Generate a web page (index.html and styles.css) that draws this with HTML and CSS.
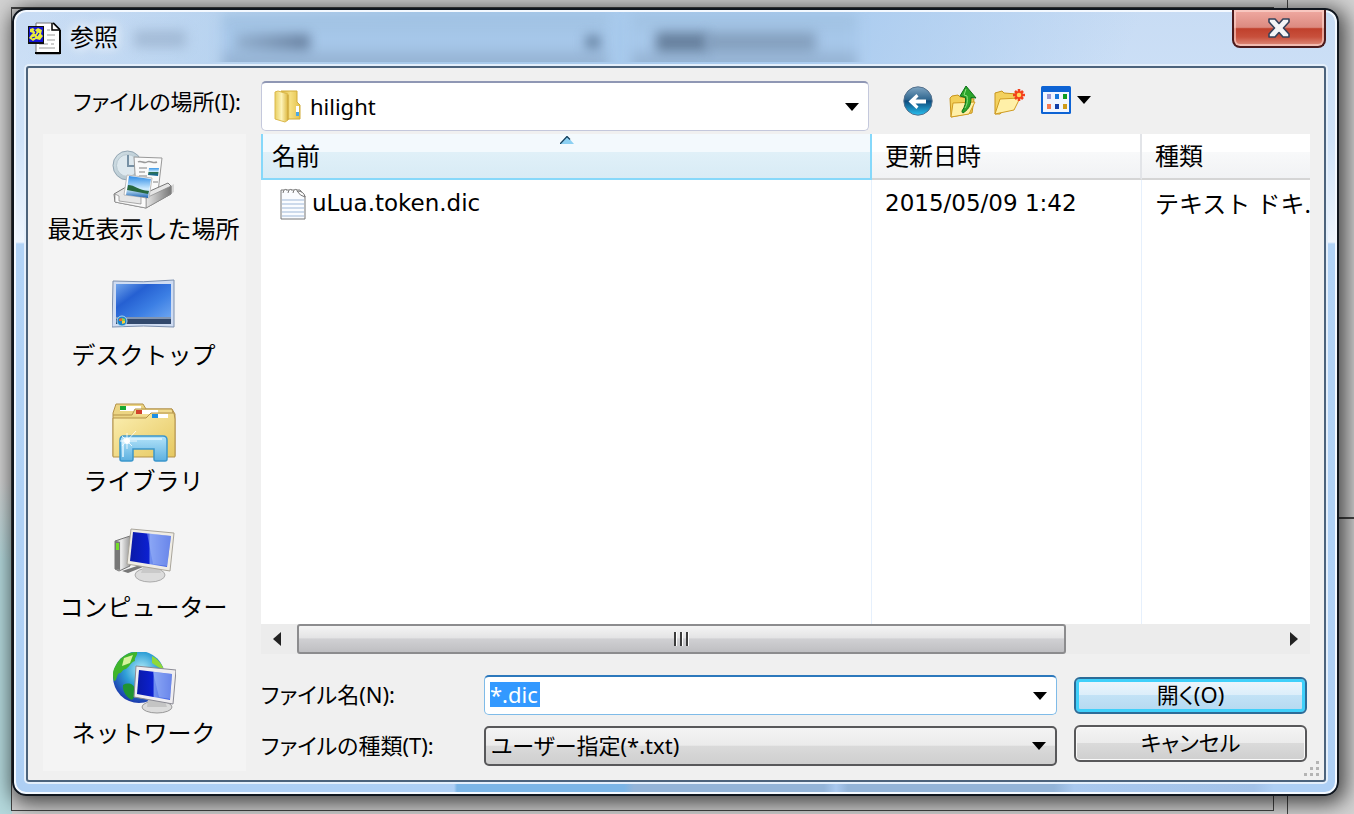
FILE: index.html
```html
<!DOCTYPE html>
<html lang="ja">
<head>
<meta charset="utf-8">
<title>参照</title>
<link rel="stylesheet" href="styles.css">
</head>
<body>
<div class="backdrop" aria-hidden="true">
  <i class="edge edge-top"></i>
  <i class="edge edge-left"></i>
  <i class="edge edge-bottom"></i>
  <i class="edge edge-side"></i>
  <i class="edge edge-frame"></i>
  <i class="edge edge-right"></i>
</div>
<main class="dialog">
  <header class="titlebar">
    <div class="glass" aria-hidden="true">
      <i class="haze haze-label"></i>
      <i class="haze haze-combo"></i>
      <i class="haze haze-word"></i>
      <i class="haze haze-dot"></i>
      <i class="haze haze-button"></i>
      <i class="haze haze-caption"></i>
      <i class="haze haze-caption2"></i>
    </div>
    <svg class="app-icon" viewBox="0 0 33 33" width="33" height="33" aria-hidden="true">
      <path d="M8 1h17l7 7v24H8z" fill="#fff" stroke="#777" stroke-width="1"/>
      <path d="M7 31h25V8M25 1l7 7" fill="none" stroke="#000" stroke-width="2"/>
      <path d="M24 1v7h7" fill="#fff" stroke="#000" stroke-width="1.5"/>
      <path d="M19 8h3M19 13h8M19 18h8M11 22h9M23 22h3M11 26h16" stroke="#999" stroke-width="1.2"/>
      <rect x="0" y="4" width="16" height="18" fill="#111"/>
      <rect x="1" y="5" width="14" height="15" fill="#1414d8"/>
      <path d="M2 7l3-1 2 2 3-2 4 2-1 4 2 2-3 4-4-1-3 2-4-3 2-3 2-2-3-1z" fill="#e8ec3c"/>
      <path d="M6 8l2 2-1 2M11 11l-2 3M4 16l3-1" stroke="#1414d8" stroke-width="1.200" fill="none"/>
    </svg>
    <h1 class="title">参照</h1>
    <button class="close" type="button" aria-label="閉じる">
      <svg viewBox="0 0 24 20" width="24" height="20" aria-hidden="true">
        <path d="M2 1h6l4 4.500L16 1h6v3l-5.500 6L22 16v3h-6l-4-4.500L8 19H2v-3l5.500-6L2 4z" fill="#f4f4f6" stroke="#35415a" stroke-width="1.6" stroke-linejoin="round"/>
      </svg>
    </button>
  </header>

  <section class="content">
    <label class="look-label" for="look">ファイルの場所(I):</label>
    <div class="look-row">
      <div class="combo combo-look">
        <svg class="folder" viewBox="0 0 28 34" width="28" height="34" aria-hidden="true">
          <defs>
            <linearGradient id="fo1" x1="0" x2="1"><stop offset="0" stop-color="#e9cf62"/><stop offset=".5" stop-color="#fdf3b8"/><stop offset="1" stop-color="#dcb73e"/></linearGradient>
            <linearGradient id="fo2" x1="0" x2="1"><stop offset="0" stop-color="#d9b440"/><stop offset=".5" stop-color="#f6df80"/><stop offset="1" stop-color="#e3c14c"/></linearGradient>
          </defs>
          <path d="M7 1h16v11l3 3v14H12z" fill="url(#fo2)" stroke="#d2ac38"/>
          <path d="M1 2l3-1 10 3v26l-3 2-10-3z" fill="url(#fo1)" stroke="#dcb94c"/>
          <path d="M14 5v25" stroke="#c9a43a"/>
          <rect x="22" y="16" width="3" height="10" fill="#fff"/>
          <rect x="22" y="22" width="3" height="4" fill="#4aa8e8"/>
        </svg>
        <select id="look"><option>hilight</option></select>
        <svg class="arrow" viewBox="0 0 14 8" width="14" height="8" aria-hidden="true"><path d="M0 0h14L7 8z"/></svg>
      </div>
      <nav class="toolbar" aria-label="ツール">
        <button type="button" aria-label="戻る">
          <svg viewBox="0 0 30 30" width="30" height="30">
            <defs>
              <linearGradient id="bk" x1="0" y1="0" x2="0" y2="1"><stop offset="0" stop-color="#7fa5c2"/><stop offset=".45" stop-color="#2f668f"/><stop offset=".5" stop-color="#0d4a7c"/><stop offset="1" stop-color="#28c0f0"/></linearGradient>
            </defs>
            <circle cx="15" cy="15" r="14.200" fill="url(#bk)" stroke="#54708c"/>
            <path d="M5.500 15.500l8-7.500 2 2.500-3 3H23v4H12.500l3 3-2 2.500z" fill="#fff"/>
          </svg>
        </button>
        <button type="button" aria-label="上のフォルダーへ">
          <svg viewBox="0 0 28 32" width="28" height="32">
            <path d="M1 12l2-2 6-1 2 2 14 2-2 14-21 4z" fill="#f2cf58" stroke="#c8951d"/>
            <path d="M4 17l22-1-6 12L2 31z" fill="#fff0a8" stroke="#d09c22"/>
            <path d="M17 0l10 12-5-.5c0 6-1 11-8 15.500-1-.5-1-1-1-2 3-4 4-9 3.500-13.500L11 10z" fill="#2ba52b" stroke="#0d6f17" stroke-linejoin="round"/>
            <path d="M17 3l-2 6 3 1c1 5 0 9-2 12" fill="none" stroke="#8be07c"/>
          </svg>
        </button>
        <button type="button" aria-label="新しいフォルダー">
          <svg viewBox="0 0 32 30" width="32" height="30">
            <path d="M2 7l7-2 2 2 13 1-1 5-16 15H2z" fill="#f3d15e" stroke="#c8951d"/>
            <path d="M7 13l20-1-6 12L2 28z" fill="#fff0a8" stroke="#d09c22"/>
            <path d="M26 3v12M20 9h12M22 5l8 8M30 5l-8 8" stroke="#f3401c" stroke-width="2.600"/>
            <circle cx="26" cy="9" r="3" fill="#ffd75a" stroke="#f3401c" stroke-width="1.500"/>
          </svg>
        </button>
        <button type="button" class="view" aria-label="表示メニュー">
          <svg viewBox="0 0 30 28" width="30" height="28">
            <rect width="30" height="28" rx="1.500" fill="#0d63d4"/>
            <rect x="2" y="6" width="26" height="20" fill="#f2f6ff"/>
            <rect x="6" y="8" width="4" height="5" fill="#9b97d2"/><rect x="14" y="8" width="4" height="5" fill="#1678dc"/><rect x="22" y="8" width="4" height="5" fill="#0d9c22"/>
            <rect x="6" y="18" width="4" height="5" fill="#f77a50"/><rect x="14" y="18" width="4" height="5" fill="#1440a8"/><rect x="22" y="18" width="4" height="5" fill="#cf9c1a"/>
          </svg>
          <svg viewBox="0 0 14 8" width="14" height="8"><path d="M0 0h14L7 8z"/></svg>
        </button>
      </nav>
    </div>

    <nav class="places" aria-label="場所">
      <button class="place" type="button">
        <svg viewBox="0 0 64 64" width="64" height="64" aria-hidden="true">
          <defs>
            <linearGradient id="rc1" x1="0" y1="0" x2="1" y2="1"><stop offset="0" stop-color="#d5e2e8"/><stop offset="1" stop-color="#a9bcc6"/></linearGradient>
            <linearGradient id="rc2" x1="0" y1="0" x2="0" y2="1"><stop offset="0" stop-color="#3a98e8"/><stop offset=".5" stop-color="#d6f0ff"/><stop offset=".55" stop-color="#2c7050"/><stop offset="1" stop-color="#1468a8"/></linearGradient>
            <linearGradient id="rc4" x1="0" y1="0" x2="0" y2="1"><stop offset="0" stop-color="#2f8ce6"/><stop offset=".6" stop-color="#d2eeff"/><stop offset="1" stop-color="#1b62b0"/></linearGradient>
            <linearGradient id="rc3" x1="0" x2="1"><stop offset="0" stop-color="#e8e8e8"/><stop offset="1" stop-color="#777"/></linearGradient>
          </defs>
          <path d="M34 60L62 44v-8l-8 4z" fill="#000" opacity=".12"/>
          <circle cx="15.500" cy="17.500" r="14.500" fill="url(#rc1)" stroke="#92a5b2"/>
          <circle cx="15.500" cy="17.500" r="11" fill="#dde8ee" stroke="#b8c8d0"/>
          <path d="M16 7v11h9" stroke="#7690a4" stroke-width="2" fill="none"/>
          <path d="M22 9l28 1-4 34-22-2z" fill="#fafafa" stroke="#999"/>
          <path d="M26 14c3-2 6 2 9 0s6 2 10 0" fill="none" stroke="#999" stroke-width="1.500"/>
          <path d="M27 20h8M27 24h6M27 28h8M41 34h5" stroke="#aaa" stroke-width="1.500"/>
          <path d="M37 20h10l-1 8-10-1z" fill="url(#rc2)"/>
          <path d="M2 46l12-7 24 4 18-8 3 3v8L34 60 3 54z" fill="#e6e6e6" stroke="#777"/>
          <path d="M34 50l25-12v8L34 60z" fill="url(#rc3)" stroke="#888" stroke-width=".7"/>
          <path d="M15 27l25 3-3 20-25-3z" fill="#fff" stroke="#bbb"/>
          <path d="M17 28l22 3-3 19-22-3z" fill="url(#rc4)"/>
          <path d="M16 37c7 0 10 5 21 6l-1 3-21-4z" fill="#27683f"/>
          <path d="M3 46l4 2v5l22 3v-7l5 1v10L3 54z" fill="#fafafa" stroke="#888" stroke-width=".7"/>
        </svg>
        <span>最近表示した場所</span>
      </button>
      <button class="place" type="button">
        <svg viewBox="0 0 64 64" width="64" height="64" aria-hidden="true">
          <defs><linearGradient id="dk" x1="0" y1="0" x2="1" y2="1"><stop offset="0" stop-color="#6fa3ea"/><stop offset=".3" stop-color="#2560d2"/><stop offset=".6" stop-color="#3c7fe4"/><stop offset="1" stop-color="#78aef4"/></linearGradient></defs>
          <path d="M1 7q30 2 61-1v47q-30-2-62 0z" fill="#cfdcf2" stroke="#7b8fae"/>
          <path d="M4 10h55v40H4z" fill="url(#dk)"/>
          <path d="M4 43h55v7H4z" fill="#31486c"/><path d="M4 43h55v2H4z" fill="#8195b2"/>
          <circle cx="10" cy="47" r="5" fill="#1d84c8" stroke="#a9d4f0"/>
          <path d="M7 45l3-1v3H7z" fill="#f0642c"/><path d="M10 44l3 1v2h-3z" fill="#8fd04c"/><path d="M10 47h3v2l-3 1z" fill="#f6cf3a"/>
        </svg>
        <span>デスクトップ</span>
      </button>
      <button class="place" type="button">
        <svg viewBox="0 0 64 64" width="64" height="64" aria-hidden="true">
          <defs>
            <linearGradient id="lb1" x1="0" y1="0" x2="1" y2="1"><stop offset="0" stop-color="#fbeeb0"/><stop offset="1" stop-color="#e6c860"/></linearGradient>
            <linearGradient id="lb2" x1="0" y1="0" x2="0" y2="1"><stop offset="0" stop-color="#b4e4fa"/><stop offset="1" stop-color="#5db0e0"/></linearGradient>
          </defs>
          <path d="M1 56V13l3-9h27l3 5h26l3 5v42z" fill="#ecd584" stroke="#b3924a"/>
          <path d="M8 6h21v5H8z" fill="#fff"/><rect x="8" y="6" width="6" height="4" fill="#16a832"/>
          <path d="M1 15h19l3-6h37l2 8" fill="#f1dc90" stroke="#b3924a"/>
          <path d="M24 10h22v4H24z" fill="#fff"/><rect x="24" y="10" width="6" height="4" fill="#d2422c"/>
          <path d="M1 57V18h33l5-5h23l1 6v38z" fill="url(#lb1)" stroke="#b3924a"/>
          <path d="M40 14h16v4H40z" fill="#fff"/><rect x="40" y="14" width="6" height="4" fill="#1d8fe4"/>
          <path d="M8 59V40q0-4 4-4h39q4 0 4 4v19q0 2-2 2H44q-2 0-2-2V49H21v10q0 2-2 2h-9q-2 0-2-2z" fill="url(#lb2)" stroke="#3b96cc" stroke-width="1.500"/>
          <path d="M11 57V41q0-2 3-2h36" fill="none" stroke="#e2f6ff" stroke-width="1.500"/>
          <path d="M15 33v16M8 41h17M10 36l10 10M24 31L10 46" stroke="#fff" stroke-width=".8"/><circle cx="15" cy="41" r="3" fill="#fff"/>
        </svg>
        <span>ライブラリ</span>
      </button>
      <button class="place" type="button">
        <svg viewBox="0 0 64 64" width="64" height="64" aria-hidden="true">
          <defs>
            <linearGradient id="pc1" x1="0" x2="1"><stop offset="0" stop-color="#0a1aa8"/><stop offset=".45" stop-color="#0c20d0"/><stop offset=".5" stop-color="#6f8ef0"/><stop offset="1" stop-color="#3555dc"/></linearGradient>
            <linearGradient id="pc2" x1="0" x2="1"><stop offset="0" stop-color="#888"/><stop offset=".4" stop-color="#eee"/><stop offset="1" stop-color="#9a9a9a"/></linearGradient>
          </defs>
          <path d="M10 45l18-6 3 2-15 6z" fill="#777"/>
          <path d="M3 15l15-5v30L7 45l-4-2z" fill="url(#pc2)" stroke="#777"/>
          <path d="M3 15l5 1v28l-5-1z" fill="#777"/><rect x="4" y="17" width="3" height="7" fill="#72dc28"/>
          <ellipse cx="38" cy="49" rx="15" ry="7" fill="#dcdcdc" stroke="#aaa"/>
          <path d="M32 38h13l4 9H29z" fill="#c9c9c9"/>
          <path d="M19 3l43 4-4 38-43-7z" fill="#efece4" stroke="#a9a59b"/>
          <path d="M21 6l38 4-4 31-37-6z" fill="url(#pc1)"/>
          <path d="M35 7l24 3-4 30-14-2z" fill="#a9c0fa" opacity=".45"/>
        </svg>
        <span>コンピューター</span>
      </button>
      <button class="place" type="button">
        <svg viewBox="0 0 64 64" width="64" height="64" aria-hidden="true">
          <defs><radialGradient id="nt" cx=".55" cy=".35" r=".65"><stop offset="0" stop-color="#aeeaf8"/><stop offset=".5" stop-color="#2f9fd6"/><stop offset="1" stop-color="#1c3cae"/></radialGradient></defs>
          <circle cx="27" cy="25" r="26" fill="url(#nt)"/>
          <path d="M3 15C8 4 17 0 25 0c1 4-3 5-2 9-4 1-5 5-9 8-4 0-4 5-7 4-3 3-2 8-5 8-1-4-2-9 1-14z" fill="#3fb52a"/>
          <path d="M12 6l9-3-3 8-8 3z" fill="#d4f29c"/>
          <path d="M11 33c5-3 11-1 12 4 2 3-1 9-3 11-5-2-10-9-9-15z" fill="#209432"/>
          <path d="M40 4c6 3 10 8 12 14l-6-3-6-4z" fill="#8fd83a"/>
          <ellipse cx="45" cy="55" rx="15" ry="6" fill="#dcdcdc" stroke="#999"/>
          <path d="M36 47h16l3 8H35z" fill="#c4c4c4"/>
          <path d="M24 14l40 4-3 34-39-7z" fill="#efedf0" stroke="#8a8a94"/>
          <path d="M27 18l33 4-2 26-33-6z" fill="url(#pc1)"/>
          <path d="M41 20l19 2-2 25-11-2z" fill="#a9c0fa" opacity=".45"/>
        </svg>
        <span>ネットワーク</span>
      </button>
    </nav>

    <div class="main">
      <div class="list">
        <table>
          <colgroup><col><col class="col-date"><col class="col-kind"></colgroup>
          <thead>
            <tr>
              <th class="sorted" scope="col">名前
                <svg class="sort" viewBox="0 0 14 8" width="14" height="8" aria-hidden="true"><path d="M0 8l7-8 7 8z" fill="#8cd0f2"/><path d="M0 8l7-7.500 3 3" fill="none" stroke="#17405c" stroke-width="1.300"/></svg>
              </th>
              <th scope="col">更新日時</th>
              <th scope="col">種類</th>
            </tr>
          </thead>
          <tbody>
            <tr>
              <td class="latin">
                <div class="file">
                  <svg viewBox="0 0 26 32" width="26" height="32" aria-hidden="true">
                    <path d="M1 2h19l5 6v23H1z" fill="#fafcff" stroke="#777"/>
                    <path d="M2 12h22M2 16h22M2 20h22M2 24h22M2 28h22" stroke="#9fb8d8"/>
                    <path d="M3 5q1-5 4-3M8 5q1-5 4-3M13 5q1-5 4-3M17 3q7 0 8 6-5-1-8-6" fill="#fff" stroke="#777"/>
                  </svg>
                  <span>uLua.token.dic</span>
                </div>
              </td>
              <td class="latin">2015/05/09 1:42</td>
              <td>テキスト ドキ.</td>
            </tr>
          </tbody>
        </table>
      </div>
      <div class="scrollbar">
        <button type="button" class="step" aria-label="左へスクロール"><svg viewBox="0 0 8 14" width="8" height="14"><path d="M8 0v14L0 7z" fill="#222"/></svg></button>
        <div class="track"><div class="thumb"><i></i><i></i><i></i></div></div>
        <button type="button" class="step" aria-label="右へスクロール"><svg viewBox="0 0 8 14" width="8" height="14"><path d="M0 0v14l8-7z" fill="#222"/></svg></button>
      </div>
      <form class="form">
        <div class="fields">
          <label for="name">ファイル名(N):</label>
          <div class="combo combo-name">
            <input id="name" type="text" value="*.dic" size="4">
            <svg class="arrow" viewBox="0 0 14 8" width="14" height="8" aria-hidden="true"><path d="M0 0h14L7 8z"/></svg>
          </div>
          <label for="kind">ファイルの種類(T):</label>
          <div class="combo combo-kind">
            <select id="kind"><option>ユーザー指定(*.txt)</option></select>
            <svg class="arrow" viewBox="0 0 14 8" width="14" height="8" aria-hidden="true"><path d="M0 0h14L7 8z"/></svg>
          </div>
        </div>
        <div class="actions">
          <button type="button" class="btn btn-open">開く(O)</button>
          <button type="button" class="btn">キャンセル</button>
        </div>
      </form>
    </div>
    <svg class="grip" viewBox="0 0 16 16" width="16" height="16" aria-hidden="true">
      <path d="M12 0h3v3h-3zM6 6h3v3H6zM12 6h3v3h-3zM0 12h3v3H0zM6 12h3v3H6zM12 12h3v3h-3z" fill="#b4b4b4"/>
    </svg>
  </section>
</main>
</body>
</html>
```

FILE: styles.css
```css
* { box-sizing: border-box; }

body {
  margin: 0;
  min-height: 100vh;
  display: flex;
  padding: 8px 15px 18px 12px;
  background:
    linear-gradient(to bottom, transparent 480px, #b4d8dc 560px) left / 12px 100% no-repeat,
    #d2d2d2;
  font-family: "Noto Sans", "Noto Sans CJK JP", sans-serif;
  font-size: 24px;
  line-height: 32px;
  color: #000;
  position: relative;
  overflow: hidden;
}

button, input, select { font: inherit; color: inherit; margin: 0; }
button { padding: 0; border: 0; background: none; }
svg { display: block; flex: none; }

/* Window edges that show around the dialog */
.backdrop { position: absolute; inset: 0; overflow: hidden; }
.edge { position: absolute; background: #444; }
.edge-top { top: 7px; left: 11px; right: 80px; height: 2px; }
.edge-left { top: 7px; left: 11px; bottom: 3px; width: 1px; }
.edge-bottom { bottom: 3px; left: 11px; right: 80px; height: 1px; }
.edge-side { bottom: 3px; right: 80px; width: 1px; height: 20px; }
.edge-frame { top: 0; bottom: 0; right: 66px; width: 1px; }
.edge-right { top: 517px; right: 0; width: 20px; height: 2px; }

.dialog {
  position: relative;
  flex: 1;
  display: flex;
  flex-direction: column;
  padding: 0 11px 12px 12px;
  border: 2px solid #10161e;
  border-radius: 14px;
  background:
    linear-gradient(110deg, transparent 2%, #a7c9ea 30%, #a9cbef 60%, transparent 84%) top / 100% 58px no-repeat,
    linear-gradient(to right, transparent 440px, #7bb5e6 443px, #7bb5e6 610px, #93b4d8 620px, #93b4d8 810px, #a9c8ee 822px, #93b4d8 834px, #93b4d8 1040px, #a9c8ee 1060px, #a3c2e8 1240px, transparent 1260px) bottom / 100% 13px no-repeat,
    linear-gradient(to bottom, #c8dcf4 0, #cfe2f8 130px, #eef5fd 232px, #b2d3f6 234px, #aecff4 100%);
  box-shadow:
    inset 0 0 0 2px #f4f9ff,
    3px 4px 20px 4px rgba(0, 0, 0, .65);
}

.titlebar {
  position: relative;
  display: flex;
  align-items: flex-start;
  height: 56px;
  padding-left: 2px;
}
.app-icon { position: relative; margin-top: 12px; }
.title {
  position: relative;
  margin: 11px 0 0 9px;
  font-size: 24px;
  font-weight: 400;
  text-shadow: 0 0 10px #fff, 0 0 16px #fff;
}
.close {
  position: relative;
  display: flex;
  justify-content: center;
  align-items: center;
  width: 94px;
  height: 38px;
  margin-left: auto;
  border: 2px solid #4a1a1c;
  border-top: 0;
  border-radius: 0 0 8px 8px;
  background: linear-gradient(#f0aaa2 0, #dc8a80 48%, #c0402c 52%, #c8503c 75%, #e09080 100%);
  box-shadow: inset 0 0 0 2px rgba(255, 220, 214, .6);
}

/* Controls of the window underneath, seen through the glass */
.glass { position: absolute; inset: 2px 0 4px; overflow: hidden; }
.haze { position: absolute; filter: blur(6px); }
.haze-label { left: 108px; top: 18px; width: 52px; height: 18px; background: #8ba2be; opacity: .5; }
.haze-combo { left: 196px; top: 2px; width: 386px; height: 60px; background: linear-gradient(#9fc0e0, #a8c9ec 50%, #96b4d4 75%); }
.haze-word { left: 210px; top: 22px; width: 74px; height: 16px; background: linear-gradient(to right, #8ba6c4, #4c617e); opacity: .7; }
.haze-dot { left: 560px; top: 24px; width: 14px; height: 12px; background: #5f7b9a; }
.haze-button { left: 606px; top: 2px; width: 225px; height: 60px; background: linear-gradient(#9fc0e0, #a8c9ec 50%, #96b4d4 75%); }
.haze-caption { left: 630px; top: 20px; width: 52px; height: 20px; background: #5c7490; opacity: .85; }
.haze-caption2 { left: 680px; top: 20px; width: 110px; height: 20px; background: #7891ae; opacity: .7; }

.content {
  position: relative;
  flex: 1;
  display: grid;
  grid-template-columns: 203px minmax(0, 1fr);
  grid-template-rows: 50px minmax(0, 1fr);
  column-gap: 15px;
  row-gap: 3px;
  padding: 13px 14px 9px 15px;
  border: 2px solid #4c637c;
  border-radius: 3px;
  background: #f0f0f0;
  box-shadow: 0 0 0 2px #e4effb;
}

.look-label, .fields, .actions { font-size: 22px; font-feature-settings: "palt"; }
.look-label { padding: 4px 5px 0 0; text-align: right; white-space: nowrap; }
.look-row {
  display: grid;
  grid-template-columns: minmax(0, 1fr) 407px;
  column-gap: 34px;
}

.combo {
  position: relative;
  display: flex;
  align-items: center;
  border-radius: 5px;
}
.combo select {
  flex: 1;
  min-width: 0;
  height: 100%;
  border: 0;
  outline: 0;
  background: none;
  appearance: none;
}
.combo .arrow { position: absolute; right: 9px; top: 0; bottom: 0; margin: auto; pointer-events: none; }
.combo-look {
  padding: 0 8px 0 12px;
  gap: 8px;
  border: 1px solid #c4c8dc;
  border-top: 2px solid #8f97b4;
  background: #fff;
  font-size: 22px;
}
.combo-look select { padding-bottom: 2px; }

.toolbar { display: flex; align-items: flex-start; gap: 16px; padding-top: 5px; }
.view { display: flex; align-items: center; gap: 6px; }

.places {
  display: flex;
  flex-direction: column;
  gap: 28px;
  padding: 14px 2px 0 0;
  background: #f4f4f4;
}
.place {
  display: flex;
  flex-direction: column;
  align-items: center;
  line-height: 34px;
  white-space: nowrap;
}

.main { display: flex; flex-direction: column; min-width: 0; padding-bottom: 5px; }
.list { flex: 1; overflow: hidden; background: #fff; }
table { width: 100%; height: 100%; border-collapse: separate; border-spacing: 0; table-layout: fixed; }
.col-date { width: 270px; }
.col-kind { width: 168px; }
th {
  position: relative;
  height: 46px;
  padding: 0 11px;
  border-right: 2px solid #e2e4e8;
  border-bottom: 2px solid #d5d5d5;
  background: linear-gradient(#fff 40%, #f8f9fa 42%, #f1f2f4);
  font-weight: 400;
  text-align: left;
}
th + th, td + td { padding-left: 13px; }
th:last-child { border-right: 0; }
th.sorted {
  border: 2px solid #86d8fa;
  border-top: 0;
  background: linear-gradient(#f3f9fd 40%, #e0f0f8 42%, #d8ebf5);
  padding-left: 9px;
}
.sort { position: absolute; top: 2px; left: 50%; margin-left: -7px; }
td {
  padding: 8px 0 0 19px;
  border-right: 1px solid #e6f0fc;
  vertical-align: top;
  white-space: nowrap;
}
td:last-child { border-right: 0; }
.latin { font-family: "DejaVu Sans", "Noto Sans CJK JP", sans-serif; font-size: 23px; line-height: 30px; }
.file { display: flex; gap: 6px; }

.scrollbar { display: flex; height: 30px; background: #ececec; }
.step { display: flex; align-items: center; justify-content: center; width: 32px; }
.track { flex: 1; display: flex; padding-left: 4px; }
.thumb {
  display: flex;
  align-items: center;
  justify-content: center;
  gap: 3px;
  width: 78.4%;
  border: 2px solid #8c8c8e;
  border-radius: 3px;
  background: linear-gradient(#f4f4f4, #e4e4e5 45%, #d0d0d3 50%, #bfbfc2);
}
.thumb i { width: 3px; height: 14px; border-left: 2px solid #3c3c3c; border-right: 1px solid #fff; }

.form { display: flex; gap: 17px; margin-top: 21px; padding-right: 3px; }
.fields {
  flex: 1;
  display: grid;
  grid-template-columns: 223px minmax(0, 1fr);
  grid-template-rows: 40px 40px;
  row-gap: 11px;
  align-items: stretch;
}
.fields label { padding-top: 4px; line-height: 30px; white-space: nowrap; }
.combo-name {
  padding: 0 0 3px 5px;
  border: 1px solid #7fbbe8;
  border-top: 2px solid #2c78bc;
  background: #fff;
}
.combo-name input {
  field-sizing: content;
  height: 25px;
  padding: 0 2px 0 0;
  border: 0;
  outline: 0;
  background: #3399ff;
  color: #fff;
  line-height: 25px;
}
.combo-kind {
  border: 2px solid #58585a;
  background: linear-gradient(#f4f4f4, #ebebeb 48%, #dadada 50%, #cfcfcf);
}
.combo-kind select { padding: 0 0 2px 5px; }
.actions { display: flex; flex-direction: column; gap: 11px; width: 233px; padding-top: 2px; }
.btn {
  height: 37px;
  padding-bottom: 4px;
  border: 2px solid #58585a;
  border-radius: 6px;
  background: linear-gradient(#f4f4f4, #ebebeb 48%, #dadada 50%, #cfcfcf);
  box-shadow: inset 0 0 0 1px #fafafa;
  line-height: 28px;
}
.btn-open {
  border-color: #2c6c98;
  background: linear-gradient(#eef6fc, #dceefa 48%, #c2e2f6 50%, #b4d8f0);
  box-shadow: inset 0 0 0 3px #3fd0fa;
}
.grip { position: absolute; right: 4px; bottom: 3px; }
```
